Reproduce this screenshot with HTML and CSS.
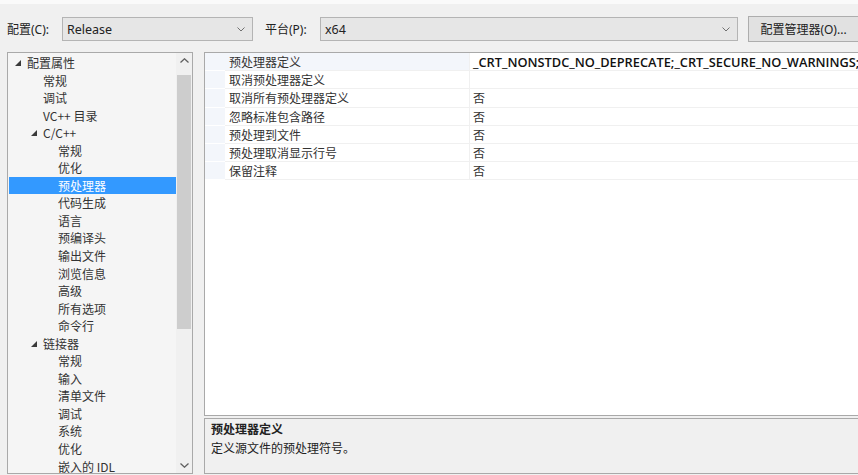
FILE: index.html
```html
<!DOCTYPE html>
<html>
<head>
  <meta charset="UTF-8">
  <title>属性页</title>
  <link rel="stylesheet" href="styles.css">
</head>
<body>
  <div class="top-strip"></div>

  <div class="toolbar">
    <span class="tool-label">配置(C):</span>
    <div class="combo combo-config">
      <span>Release</span>
      <svg class="chevron" viewBox="0 0 8 5" width="8" height="5"><path d="M0.5 0.5 L4 4 L7.5 0.5" fill="none" stroke="#707070" stroke-width="1"/></svg>
    </div>
    <span class="tool-label">平台(P):</span>
    <div class="combo combo-platform">
      <span>x64</span>
      <svg class="chevron" viewBox="0 0 8 5" width="8" height="5"><path d="M0.5 0.5 L4 4 L7.5 0.5" fill="none" stroke="#707070" stroke-width="1"/></svg>
    </div>
    <button class="config-button">配置管理器(O)...</button>
  </div>

  <div class="main">
    <div class="tree-panel">
      <ul class="tree">
        <li class="lvl0"><svg class="arrow" viewBox="0 0 6 6" width="6" height="6"><polygon points="6,0 6,6 0,6" fill="#3a3a3a"/></svg>配置属性</li>
        <li class="lvl1">常规</li>
        <li class="lvl1">调试</li>
        <li class="lvl1">VC++ 目录</li>
        <li class="lvl1 group"><svg class="arrow" viewBox="0 0 6 6" width="6" height="6"><polygon points="6,0 6,6 0,6" fill="#3a3a3a"/></svg>C/C++</li>
        <li class="lvl2">常规</li>
        <li class="lvl2">优化</li>
        <li class="lvl2 selected">预处理器</li>
        <li class="lvl2">代码生成</li>
        <li class="lvl2">语言</li>
        <li class="lvl2">预编译头</li>
        <li class="lvl2">输出文件</li>
        <li class="lvl2">浏览信息</li>
        <li class="lvl2">高级</li>
        <li class="lvl2">所有选项</li>
        <li class="lvl2">命令行</li>
        <li class="lvl1 group"><svg class="arrow" viewBox="0 0 6 6" width="6" height="6"><polygon points="6,0 6,6 0,6" fill="#3a3a3a"/></svg>链接器</li>
        <li class="lvl2">常规</li>
        <li class="lvl2">输入</li>
        <li class="lvl2">清单文件</li>
        <li class="lvl2">调试</li>
        <li class="lvl2">系统</li>
        <li class="lvl2">优化</li>
        <li class="lvl2">嵌入的 IDL</li>
      </ul>
      <div class="scrollbar">
        <svg class="scroll-arrow" viewBox="0 0 9 5" width="9" height="5"><path d="M0.5 4.5 L4.5 0.8 L8.5 4.5" fill="none" stroke="#606060" stroke-width="1.3"/></svg>
        <div class="scroll-track"><div class="scroll-thumb"></div></div>
        <svg class="scroll-arrow" viewBox="0 0 9 5" width="9" height="5"><path d="M0.5 0.5 L4.5 4.2 L8.5 0.5" fill="none" stroke="#606060" stroke-width="1.3"/></svg>
      </div>
    </div>

    <div class="right-col">
      <div class="prop-grid">
        <div class="prop-row first">
          <div class="gutter"></div>
          <div class="prop-name">预处理器定义</div>
          <div class="prop-value bold">_CRT_NONSTDC_NO_DEPRECATE;_CRT_SECURE_NO_WARNINGS;%(PreprocessorDefinitions)</div>
        </div>
        <div class="prop-row">
          <div class="gutter"></div>
          <div class="prop-name">取消预处理器定义</div>
          <div class="prop-value"></div>
        </div>
        <div class="prop-row">
          <div class="gutter"></div>
          <div class="prop-name">取消所有预处理器定义</div>
          <div class="prop-value">否</div>
        </div>
        <div class="prop-row">
          <div class="gutter"></div>
          <div class="prop-name">忽略标准包含路径</div>
          <div class="prop-value">否</div>
        </div>
        <div class="prop-row">
          <div class="gutter"></div>
          <div class="prop-name">预处理到文件</div>
          <div class="prop-value">否</div>
        </div>
        <div class="prop-row">
          <div class="gutter"></div>
          <div class="prop-name">预处理取消显示行号</div>
          <div class="prop-value">否</div>
        </div>
        <div class="prop-row">
          <div class="gutter"></div>
          <div class="prop-name">保留注释</div>
          <div class="prop-value">否</div>
        </div>
      </div>

      <div class="desc-pane">
        <div class="desc-title">预处理器定义</div>
        <div class="desc-text">定义源文件的预处理符号。</div>
      </div>
    </div>
  </div>
</body>
</html>
```

FILE: styles.css
```css
:root {
  --window-bg: #f0f0f0;
  --panel-bg: #f5f5f5;
  --border-color: #a9a9a9;
  --text-color: #333333;
  --select-color: #3399ff;
  --gutter-color: #f3f6fb;
  --row-line: #f0f0f0;
}

body {
  font-family: "Noto Sans", "Noto Sans CJK SC", sans-serif;
  font-size: 12px;
  margin: 0;
  padding: 0;
  width: 858px;
  height: 475px;
  overflow: hidden;
  background-color: var(--window-bg);
  color: var(--text-color);
  display: flex;
  flex-direction: column;
}

.top-strip {
  height: 4px;
  background-color: #fafafa;
}

/* configuration / platform bar */
.toolbar {
  display: flex;
  align-items: center;
  padding: 12px 0 0 7px;
  height: 26px;
}

.tool-label {
  color: #222222;
  width: 55px;
  flex: none;
  white-space: nowrap;
}

.combo {
  height: 22px;
  border: 1px solid #b4b4b4;
  background-color: #e6e6e6;
  display: flex;
  align-items: center;
  justify-content: space-between;
  padding: 0 7px 0 4px;
  box-sizing: content-box;
  color: #222222;
  font-size: 12.5px;
  flex: none;
}

.combo-config {
  width: 178px;
  margin-right: 12px;
}

.combo-platform {
  width: 405px;
}

.chevron {
  display: block;
}

.config-button {
  margin-left: 10px;
  width: 111px;
  height: 26px;
  flex: none;
  border: 1px solid #adadad;
  background-color: #e1e1e1;
  font-family: inherit;
  font-size: 12px;
  color: #222222;
  padding: 0;
  white-space: nowrap;
}

.main {
  flex: 1;
  display: flex;
  padding: 10px 0 1px 7px;
  gap: 11px;
  min-height: 0;
}

/* left category tree */
.tree-panel {
  width: 186px;
  border: 1px solid var(--border-color);
  background-color: var(--panel-bg);
  display: flex;
  box-sizing: border-box;
  overflow: hidden;
}

.tree {
  list-style: none;
  margin: 0;
  padding: 1px 0 0 1px;
  flex: 1;
  font-family: "Noto Sans CJK SC", sans-serif;
}

.tree li {
  height: 17.55px;
  line-height: 17.55px;
  white-space: nowrap;
  display: flex;
  align-items: center;
}

.tree .lvl0 {
  padding-left: 6px;
}

.tree .lvl1 {
  padding-left: 34px;
}

.tree .lvl1.group {
  padding-left: 22px;
}

.tree .lvl2 {
  padding-left: 49px;
}

.arrow {
  margin-right: 6px;
  flex: none;
}

.tree .selected {
  background-color: var(--select-color);
  color: #ffffff;
}

.scrollbar {
  width: 16px;
  background-color: var(--window-bg);
  display: flex;
  flex-direction: column;
  align-items: center;
  padding: 5px 0 5px;
}

.scroll-arrow {
  display: block;
  flex: none;
}

.scroll-track {
  flex: 1;
  width: 100%;
  padding: 12px 0 134px;
  box-sizing: border-box;
}

.scroll-thumb {
  height: 100%;
  margin: 0 1px;
  background-color: #cdcdcd;
}

/* property grid + description */
.right-col {
  flex: 1;
  display: flex;
  flex-direction: column;
  gap: 2px;
  min-width: 0;
}

.prop-grid {
  height: 364px;
  border: 1px solid var(--border-color);
  border-right: none;
  background-color: #ffffff;
  box-sizing: border-box;
  overflow: hidden;
  font-family: "Noto Sans CJK SC", sans-serif;
}

.prop-row {
  display: flex;
  height: 18.2px;
  line-height: 18px;
}

.gutter {
  width: 20px;
  flex: none;
  background-color: var(--gutter-color);
  border-bottom: 1px solid #ffffff;
  box-sizing: border-box;
}

.prop-name {
  width: 245px;
  flex: none;
  padding-left: 4px;
  border-bottom: 1px solid var(--row-line);
  border-right: 1px solid var(--row-line);
  box-sizing: border-box;
  white-space: nowrap;
}

.prop-row.first .prop-name {
  background-color: var(--gutter-color);
}

.prop-value {
  flex: 1;
  padding-left: 3px;
  border-bottom: 1px solid var(--row-line);
  white-space: nowrap;
  overflow: hidden;
}

.prop-value.bold {
  font-family: "Open Sans", "Noto Sans CJK SC", sans-serif;
  font-weight: 600;
  color: #111111;
  font-size: 12.8px;
}

.desc-pane {
  flex: 1;
  border: 1px solid var(--border-color);
  border-right: none;
  background-color: var(--window-bg);
  padding: 1px 6px;
  font-family: "Noto Sans CJK SC", sans-serif;
  color: #222222;
}

.desc-title {
  font-weight: bold;
  line-height: 18px;
}

.desc-text {
  line-height: 20px;
}
```
